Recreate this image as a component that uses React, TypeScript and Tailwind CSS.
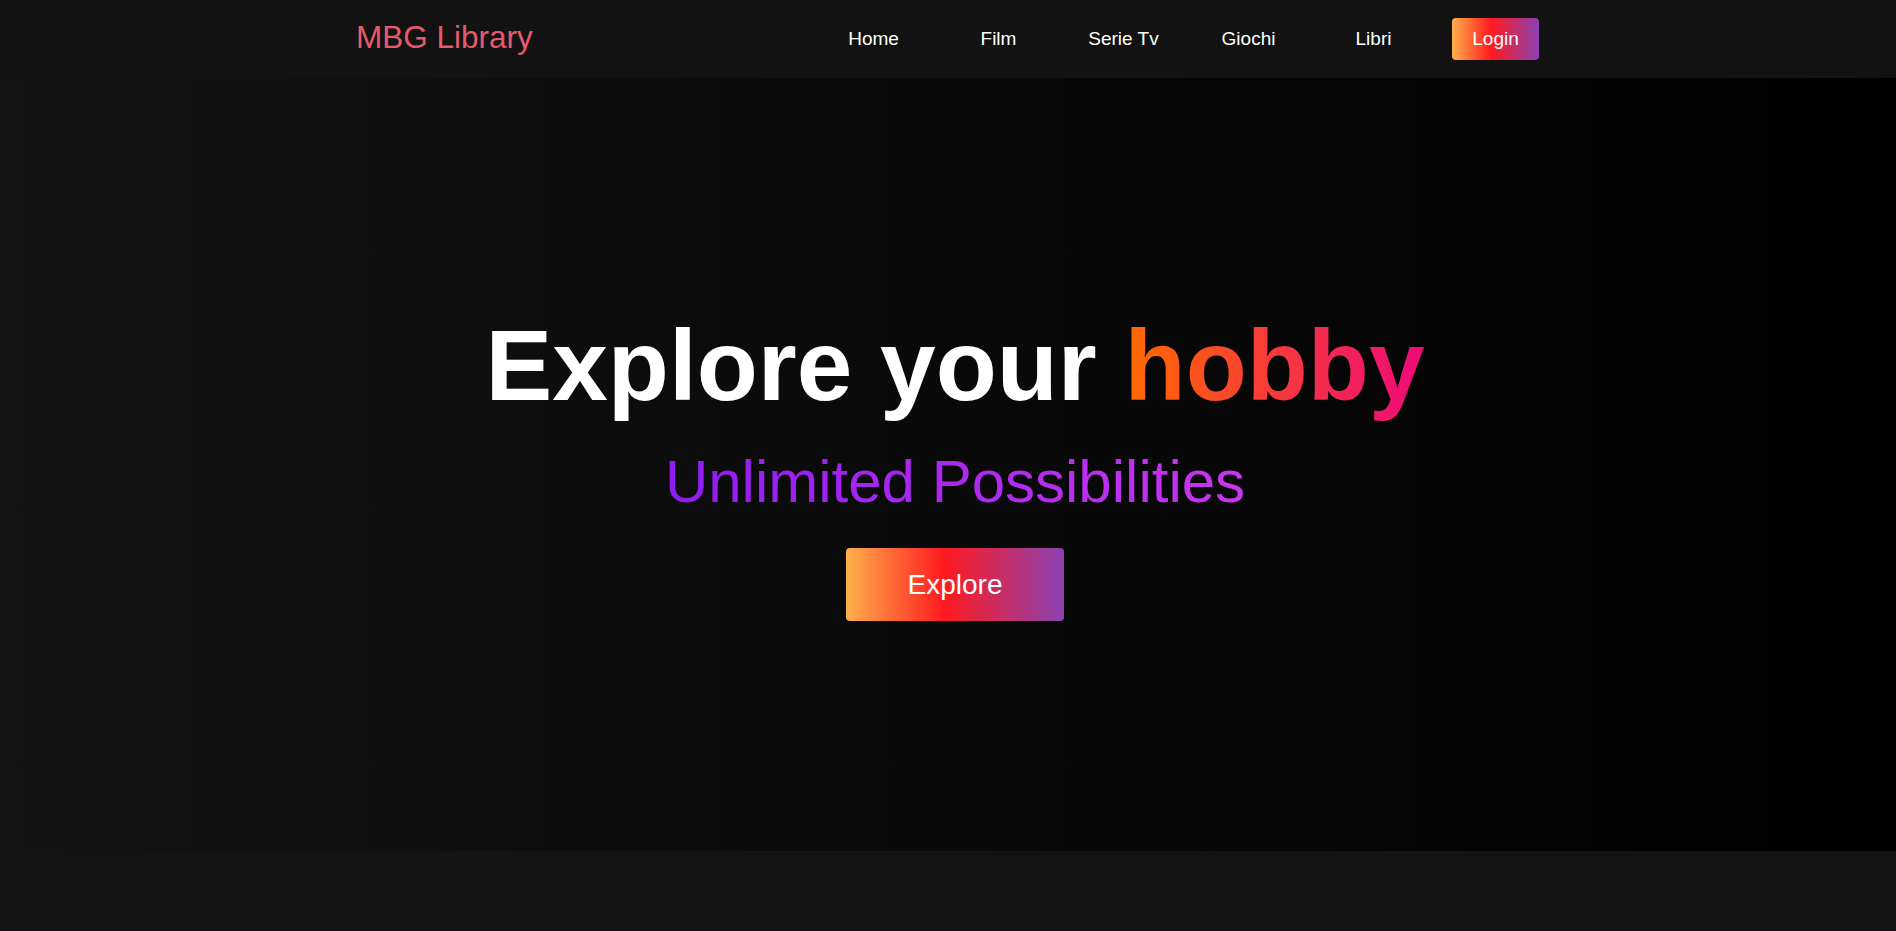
const links = ['Home', 'Film', 'Serie Tv', 'Giochi', 'Libri'];

const Navbar = () => {
  return (
    <nav className="flex h-[78px] items-center justify-between bg-[#121212] pl-[356px] pr-[357px]">
      <a href="#" className="-mt-[3px] text-[31.5px] leading-none text-[#e55a6c]">
        MBG Library
      </a>
      <div className="flex items-center">
        {links.map((link) => (
          <a key={link} href="#" className="w-[125px] text-center text-[19px] text-white">
            {link}
          </a>
        ))}
        <button className="ml-4 flex h-[42px] w-[87px] items-center justify-center rounded-[4px] bg-linear-to-r/srgb from-[#fdb04b] via-[#ff1a1f] via-45% to-[#8b42b3] text-[19px] text-white">
          Login
        </button>
      </div>
    </nav>
  );
};

const Hero = () => {
  return (
    <section className="flex h-[773px] flex-col items-center justify-center bg-linear-to-r/srgb from-[#131313] to-[#000000] pl-[14px]">
      <h1 className="text-[100px] font-bold leading-[115px] text-white">
        Explore your{' '}
        <span className="bg-linear-to-r/srgb from-[#ff6a00] to-[#ee0979] bg-clip-text text-transparent">hobby</span>
      </h1>
      <h2 className="mt-6 bg-linear-to-r/srgb from-[#8e1cf0] to-[#ca35f0] bg-clip-text text-[60px] leading-[69px] text-transparent">
        Unlimited Possibilities
      </h2>
      <button className="mt-8 flex h-[73px] w-[218px] items-center justify-center rounded-[4px] bg-linear-to-r/srgb from-[#fdb04b] via-[#ff1a1f] via-45% to-[#8b42b3] text-[28px] text-white">
        Explore
      </button>
    </section>
  );
};

export default function App() {
  return (
    <div className="min-h-[931px] bg-[#131313]" style={{ fontFamily: '"Liberation Sans", Arial, sans-serif' }}>
      <Navbar />
      <Hero />
    </div>
  );
}
